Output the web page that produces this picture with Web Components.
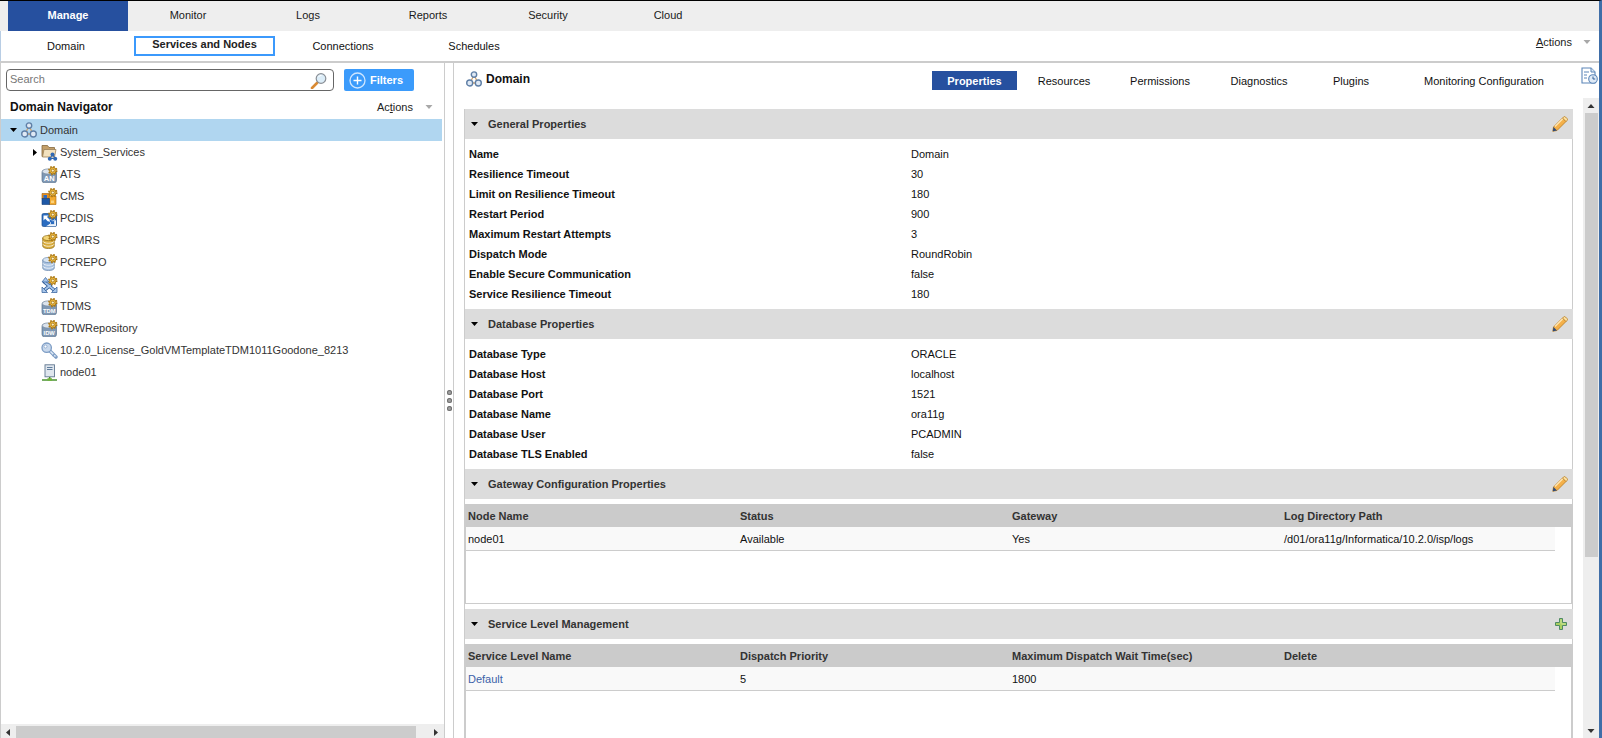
<!DOCTYPE html>
<html lang="en"><head><meta charset="utf-8"><title>Domain</title>
<style>html,body{margin:0;padding:0;background:#fff;overflow:hidden}</style></head>
<body>
<x-app>
  <x-main-tabs>
    <x-main-tab active>Manage</x-main-tab><x-main-tab>Monitor</x-main-tab><x-main-tab>Logs</x-main-tab><x-main-tab>Reports</x-main-tab><x-main-tab>Security</x-main-tab><x-main-tab>Cloud</x-main-tab>
  </x-main-tabs>
  <x-sub-nav>
    <x-sub-item w="130" style="margin-right:3px">Domain</x-sub-item><x-sub-item w="141" active>Services and Nodes</x-sub-item><x-sub-item w="136">Connections</x-sub-item><x-sub-item w="126">Schedules</x-sub-item>
    <x-actions slot="end" style="margin:0 8px 8px 0"><u>A</u>ctions</x-actions>
  </x-sub-nav>
  <x-split>
    <x-navigator slot="left">
      <x-search-bar slot="top"></x-search-bar>
      <x-nav-head slot="top"></x-nav-head>
      <x-tree-row icon="domain" depth="0" expanded selected>Domain</x-tree-row>
      <x-tree-row icon="folder" depth="1" collapsed>System_Services</x-tree-row>
      <x-tree-row icon="ats" depth="1">ATS</x-tree-row>
      <x-tree-row icon="cms" depth="1">CMS</x-tree-row>
      <x-tree-row icon="dis" depth="1">PCDIS</x-tree-row>
      <x-tree-row icon="mrs" depth="1">PCMRS</x-tree-row>
      <x-tree-row icon="repo" depth="1">PCREPO</x-tree-row>
      <x-tree-row icon="pis" depth="1">PIS</x-tree-row>
      <x-tree-row icon="tdm" depth="1">TDMS</x-tree-row>
      <x-tree-row icon="tdw" depth="1">TDWRepository</x-tree-row>
      <x-tree-row icon="key" depth="1">10.2.0_License_GoldVMTemplateTDM1011Goodone_8213</x-tree-row>
      <x-tree-row icon="node" depth="1">node01</x-tree-row>
    </x-navigator>
    <x-details slot="right">
      <x-detail-head slot="head">
        <x-detail-tab w="85" active>Properties</x-detail-tab><x-detail-tab w="94">Resources</x-detail-tab><x-detail-tab w="98">Permissions</x-detail-tab><x-detail-tab w="100">Diagnostics</x-detail-tab><x-detail-tab w="84">Plugins</x-detail-tab><x-detail-tab w="182">Monitoring Configuration</x-detail-tab>
      </x-detail-head>
      <x-section heading="General Properties" action="edit">
        <x-prop name="Name">Domain</x-prop>
        <x-prop name="Resilience Timeout">30</x-prop>
        <x-prop name="Limit on Resilience Timeout">180</x-prop>
        <x-prop name="Restart Period">900</x-prop>
        <x-prop name="Maximum Restart Attempts">3</x-prop>
        <x-prop name="Dispatch Mode">RoundRobin</x-prop>
        <x-prop name="Enable Secure Communication">false</x-prop>
        <x-prop name="Service Resilience Timeout">180</x-prop>
      </x-section>
      <x-section heading="Database Properties" action="edit">
        <x-prop name="Database Type">ORACLE</x-prop>
        <x-prop name="Database Host">localhost</x-prop>
        <x-prop name="Database Port">1521</x-prop>
        <x-prop name="Database Name">ora11g</x-prop>
        <x-prop name="Database User">PCADMIN</x-prop>
        <x-prop name="Database TLS Enabled">false</x-prop>
      </x-section>
      <x-section heading="Gateway Configuration Properties" action="edit">
        <x-grid-table>
          <x-cell slot="head">Node Name</x-cell><x-cell slot="head">Status</x-cell><x-cell slot="head">Gateway</x-cell><x-cell slot="head">Log Directory Path</x-cell>
          <x-cell>node01</x-cell><x-cell>Available</x-cell><x-cell>Yes</x-cell><x-cell>/d01/ora11g/Informatica/10.2.0/isp/logs</x-cell>
        </x-grid-table>
      </x-section>
      <x-section heading="Service Level Management" action="add">
        <x-grid-table>
          <x-cell slot="head">Service Level Name</x-cell><x-cell slot="head">Dispatch Priority</x-cell><x-cell slot="head">Maximum Dispatch Wait Time(sec)</x-cell><x-cell slot="head">Delete</x-cell>
          <x-cell link>Default</x-cell><x-cell>5</x-cell><x-cell>1800</x-cell><x-cell></x-cell>
        </x-grid-table>
      </x-section>
    </x-details>
  </x-split>
</x-app>
<script>
const gear=(x=11.8,y=4.6)=>`<g transform="translate(${x} ${y})"><circle r="3.9" fill="none" stroke="#b07a10" stroke-width="1.600" stroke-dasharray="1.530 1.530"/><circle r="3.300" fill="#f6c03f" stroke="#8f620c" stroke-width=".7"/><circle r="1.500" fill="#fff2c4" stroke="#8a5c08" stroke-width=".7"/></g>`;
const net=`<path d="M8 4 4 12h8z" fill="none" stroke="#d3a56e" stroke-width="1.300"/><g fill="#dfe9f5" stroke="#5f7fa6" stroke-width="1.400"><circle cx="8" cy="3.600" r="2.700"/><circle cx="3.700" cy="12" r="3"/><circle cx="12.300" cy="12" r="3"/></g>`;
const cyl=(t)=>`<rect x="1" y="4" width="14.500" height="12.800" rx="2.500" fill="#7f98b4" stroke="#5c748e" stroke-width=".7"/><ellipse cx="7" cy="5.500" rx="5.700" ry="2.600" fill="#dbe3ec" stroke="#7c8ea2" stroke-width=".7"/><text x="8.200" y="15.300" font-family="Liberation Sans" font-size="${t.length>2?5.800:7.500}" font-weight="700" fill="#fff" text-anchor="middle">${t}</text>`;
const stack=(a,b,c)=>`<g fill="${a}" stroke="${c}" stroke-width=".7"><path d="M1.700 6v8c0 3.400 11.600 3.400 11.600 0V6z"/><ellipse cx="7.500" cy="6" rx="5.800" ry="2.600" fill="${b}"/></g><path d="M2 9.300c1 2.600 10 2.600 11 0M2 12.300c1 2.600 10 2.600 11 0" fill="none" stroke="#fff" stroke-opacity=".8" stroke-width=".9"/>`;
const ICONS={
 domain:net,
 folder:`<path d="M1 1.500h5.500L8 3.500h5.500v9H1z" fill="#c4a06a" stroke="#84683e" stroke-width=".8"/><path d="M3 5.500h12L13.500 13H1.500z" fill="#f2e2bf" stroke="#9a8058" stroke-width=".8"/><path d="M11.500 10.500 9 14.500h5z" fill="none" stroke="#2b62ac"/><g fill="#2f68b4"><circle cx="11.500" cy="10.500" r="2"/><circle cx="8.800" cy="14.800" r="2"/><circle cx="14.200" cy="14.800" r="2"/></g>`,
 ats:cyl('AN')+gear(),
 cms:`<path d="M1 5.500h7.500V11H1z" fill="#e8901e" stroke="#9a5a08" stroke-width=".6"/><path d="M8 8h7v8.500H8z" fill="#f2aa30" stroke="#a86a0a" stroke-width=".6"/><path d="M1 10.500h7.500v6H1z" fill="#1d58a6" stroke="#123d78" stroke-width=".6"/><path d="M2.500 7h3.500v3H2.500z" fill="#2f6cc0"/><path d="M10 12.500h3v2.500h-3z" fill="#fbd27a"/>`+gear(),
 dis:`<rect x="1" y="3.500" width="14.500" height="13" rx="1.500" fill="#2a6cc0" stroke="#174a8c" stroke-width=".7"/><path d="M15 10v5.500a.8.800 0 0 1-.8.800H5z" fill="#eef4fb"/><path d="M2.500 5.500h5L6 7l3 3-1.800 1.800-3-3L2.500 10.500z" fill="#fff"/><path d="M13.500 14.500h-5l1.500-1.500-2-2 1.800-1.800 2 2 1.700-1.700z" fill="#2a6cc0" stroke="#fff" stroke-width=".6"/>`+gear(),
 mrs:stack('#d9ac3c','#f2d475','#8f6d18')+gear(),
 repo:stack('#a9c2e0','#d7e4f2','#6a88ac')+gear(),
 pis:`<g fill="none" stroke-linecap="square"><path d="M4 6.500 13 14M3.500 14 9 9.500" stroke="#2c5a98" stroke-width="3.400"/><path d="M4 6.500 13 14M3.500 14 9 9.500" stroke="#a8c6ea" stroke-width="1.800"/></g><g fill="#a8c6ea" stroke="#2c5a98" stroke-width=".7" stroke-linejoin="round"><path d="M1 6 4.500 1.500 8 6z"/><path d="M1 11l0 5.500L6.500 16.500z"/><path d="M16 16.500 10.500 16.500 16 11z"/></g>`+gear(),
 tdm:cyl('TDM')+gear(),
 tdw:cyl('IDW')+gear(),
 key:`<g fill="none"><path d="m7 7 8 8" stroke="#7c9cc4" stroke-width="3.400" stroke-linecap="round"/><path d="m7.500 7.500 7.500 7.500" stroke="#e0eaf6" stroke-width="1.400"/><path d="m11.500 14 2-2M14 16l1.500-1.500" stroke="#7c9cc4" stroke-width="1.300"/><circle cx="5.700" cy="5.700" r="4.700" fill="#c8d8ec" stroke="#7c9cc4" stroke-width="1.300"/><circle cx="4.500" cy="4.500" r="1.500" fill="#fff" stroke="#7c9cc4" stroke-width=".7"/></g>`,
 node:`<rect x="4" y=".8" width="9.500" height="12" fill="#dfe6ee" stroke="#607890" stroke-width=".9"/><path d="M6 3.500h5.500M6 5.500h5.500" stroke="#5f7c9c"/><path d="M8.700 13v2" stroke="#4a8a2a" stroke-width="1.500"/><path d="M1 16h15" stroke="#3c8a20" stroke-width="1.400"/><rect x="6.500" y="14.200" width="4.400" height="2.600" fill="#6fb23c"/>`
};
const svg=(body,w=17,h=17,vb='0 0 17 17')=>`<svg xmlns="http://www.w3.org/2000/svg" width="${w}" height="${h}" viewBox="${vb}" style="display:block;flex:none">${body}</svg>`;
const PENCIL=svg(`<path d="M1.500 11 10.500 2l3.500 3.500-9 9L.8 15.300z" fill="#f4b04a" stroke="#b97a1a" stroke-width=".8" stroke-linejoin="round"/><path d="m3 10.500 8-8" stroke="#fde8b8" stroke-width="1.300"/><path d="M.8 15.300 1.500 11 5 14.500z" fill="#2e4a78"/><path d="m10.500 2 1-1a1.400 1.400 0 0 1 2 0l1.500 1.500a1.400 1.400 0 0 1 0 2l-1 1z" fill="#fbe0a0" stroke="#b97a1a" stroke-width=".8"/>`,16,16,'0 0 16 16');
const PLUS=`<div style="margin-right:1px;flex:none">`+svg(`<path d="M4.500 .5h3v4h4v3h-4v4h-3v-4h-4v-3h4z" fill="#a9cf60" stroke="#4e8a64" stroke-width="1"/><path d="M5.500 1.500h1v4h4v1h-4v-1h-1z" fill="#d0e6a0"/>`,12,12,'0 0 12 12')+`</div>`;
const TRI_D=(c='#000',w=7,h=4)=>`<svg width="${w}" height="${h}" viewBox="0 0 7 4" style="display:block;flex:none"><path d="M0 0h7L3.500 4z" fill="${c}"/></svg>`;
const TRI_R=`<svg width="4" height="7" viewBox="0 0 4 7" style="display:block;flex:none"><path d="M0 0v7l4-3.500z" fill="#000"/></svg>`;

function el(name,css,render){
  customElements.define(name,class extends HTMLElement{
    connectedCallback(){
      if(this.shadowRoot)return;
      const r=this.attachShadow({mode:'open'});
      r.innerHTML=`<style>${css}</style>`+(render?render(this):'<slot></slot>');
    }
  });
}
el('x-app',`:host{display:flex;flex-direction:column;width:1602px;height:738px;box-sizing:border-box;border-top:1px solid #000;border-right:3px solid #3f6ea8;overflow:hidden;font:11px "Liberation Sans",Arial,sans-serif;color:#111;background:#fff}`);
el('x-main-tabs',`:host{display:flex;flex:none;height:30px;background:#eee;padding-left:8px}`);
el('x-main-tab',`:host{display:flex;align-items:center;justify-content:center;width:120px;height:30px;box-sizing:border-box;padding-bottom:2px;color:#1a1a1a}
:host([active]){background:#26509f;color:#fff;font-weight:700}`);
el('x-sub-nav',`:host{display:flex;flex:none;height:30px;align-items:center;border-left:1px solid #b8cde4;box-sizing:border-box}
.end{margin-left:auto;display:flex}`,()=>`<slot></slot><div class="end"><slot name="end"></slot></div>`);
el('x-sub-item',`:host{display:flex;align-items:center;justify-content:center;height:20px;box-sizing:border-box;color:#111}
:host([active]){border:2px solid #3b99fc;font-weight:700;padding-bottom:4px;color:#222}`,h=>{h.style.width=h.getAttribute('w')+'px';return '<slot></slot>'});
el('x-actions',`:host{display:flex;align-items:center;gap:11px;color:#222}`,()=>`<span><slot></slot></span>${TRI_D('#a8a8a8',8,4)}`);
el('x-split',`:host{display:flex;flex:1;min-height:0;border-top:2px solid #ccc}
.h{width:8px;flex:none;display:flex;flex-direction:column;align-items:center;justify-content:center;gap:3px}
.h i{width:5px;height:5px;border-radius:50%;background:#a0a0a0;box-shadow:inset 0 0 0 1px #707070}`,
()=>`<slot name="left"></slot><div class="h"><i></i><i></i><i></i></div><slot name="right"></slot>`);
el('x-navigator',`:host{display:flex;flex-direction:column;width:445px;flex:none;box-sizing:border-box;border-left:1px solid #ccc;border-right:1px solid #ccc}
.top{flex:none}.tree{flex:1;min-height:0;overflow:hidden}
.sb{flex:none;height:14px;display:flex;align-items:flex-end;background:#eee;padding-left:5px}
.sb .t{height:12px;width:400px;background:#ccc;margin:0 18px 0 5px}.sb .a{height:12px;display:flex;align-items:center;width:5px}`,
()=>`<div class="top"><slot name="top"></slot></div><div class="tree"><slot></slot></div>
<div class="sb"><span class="a"><svg width="4" height="7" viewBox="0 0 4 7"><path d="M4 0v7L0 3.500z" fill="#333"/></svg></span><span class="t"></span><span class="a"><svg width="4" height="7" viewBox="0 0 4 7"><path d="M0 0v7l4-3.500z" fill="#333"/></svg></span></div>`);
el('x-search-bar',`:host{display:flex;height:28px;padding:6px 0 0 5px;box-sizing:border-box;gap:10px}
.s{width:328px;height:22px;box-sizing:border-box;border:1px solid #666;border-radius:4px;display:flex;align-items:center;padding:0 6px 0 3px;justify-content:space-between;color:#777;font-size:11px;background:#fff}
.s span{padding-bottom:2px}
.b{width:70px;height:22px;border-radius:2px;background:#3b9bfb;color:#fff;font-weight:700;display:flex;align-items:center;gap:4px;padding-left:5px;box-sizing:border-box}`,
()=>`<div class="s"><span>Search</span>${svg(`<path d="M7 11 2 16" stroke="#d98a34" stroke-width="2.600" stroke-linecap="round"/><circle cx="11" cy="6.500" r="4.800" fill="#dcedf8" stroke="#8a8f96" stroke-width="1.200"/><path d="M8.500 5a3 3 0 0 1 3-1.500" stroke="#fff" fill="none"/>`)}</div>
<div class="b">${svg(`<circle cx="8.500" cy="8.500" r="7.500" fill="none" stroke="#cfe6ff" stroke-width="1.300"/><path d="M8.500 4.500v8M4.500 8.500h8" stroke="#fff" stroke-width="1.400"/>`)}<span>Filters</span></div>`);
el('x-nav-head',`:host{display:flex;height:28px;align-items:center;padding:4px 11px 0 9px;box-sizing:border-box;justify-content:space-between}
b{font-size:12px;color:#111}`,()=>`<b>Domain Navigator</b><x-actions style="gap:12px">Ac<u>t</u>ions</x-actions>`);
el('x-tree-row',`:host{display:flex;align-items:center;height:22px;box-sizing:border-box;color:#333;margin-right:2px}
:host([selected]){background:#b0d6f0}
.a{width:7px;flex:none;display:flex;justify-content:center}`,h=>{
  const d=+h.getAttribute('depth');
  h.style.paddingLeft=(d?30:9)+'px';
  const arrow=h.hasAttribute('expanded')?TRI_D():h.hasAttribute('collapsed')?TRI_R:'';
  return `<span class="a">${arrow}</span><span style="margin:0 ${d?2:3}px 0 ${d?3:4}px">${h.getAttribute('icon')=='domain'?svg(ICONS.domain,16,16,'0 0 16 16'):svg(ICONS[h.getAttribute('icon')])}</span><slot></slot>`;
});
el('x-details',`:host{display:flex;flex-direction:column;flex:1;min-width:0;border-left:1px solid #ccc;box-sizing:border-box}
.head{flex:none}.body{flex:1;min-height:0;display:flex;gap:10px;padding-left:10px}
.c{width:1109px;padding-top:11px;overflow:hidden;flex:none}
.sb{width:16px;background:#eee;flex:none;display:flex;flex-direction:column;align-items:center}
.sb .a{height:15px;display:flex;align-items:center}.sb .t{width:13px;height:444px;background:#ccc}
.sb .sp{flex:1}`,()=>`<div class="head"><slot name="head"></slot></div><div class="body"><div class="c"><slot></slot></div>
<div class="sb"><span class="a"><svg width="8" height="4" viewBox="0 0 7 4"><path d="M0 4h7L3.500 0z" fill="#333"/></svg></span><span class="t"></span><span class="sp"></span><span class="a">${TRI_D('#333',8,4)}</span></div></div>`);
el('x-detail-head',`:host{display:flex;height:35px;box-sizing:border-box;padding:8px 1px 0 12px;align-items:flex-start}
.t{display:flex;align-items:center;gap:4px;font-weight:700;font-size:12px;color:#111;height:16px}
.r{margin-left:auto;display:flex}.i{margin-left:6px;margin-top:-4px}`,
()=>`<div class="t">${svg(ICONS.domain,16,16,'0 0 16 16')}<span>Domain</span></div><div class="r"><slot></slot></div>
<div class="i">${svg(`<path d="M1 1h9l4 4v11H1z" fill="#fff" stroke="#5c86b8" stroke-width="1.100"/><path d="M10 1v4h4" fill="#dbe7f4" stroke="#5c86b8"/><path d="M3 5h5M3 8h3M3 11h3" stroke="#5c86b8"/><circle cx="12" cy="12" r="4.300" fill="#dfeaf6" stroke="#5c86b8" stroke-width="1.100"/><path d="M12 9.500V12h2.200" stroke="#2f5c96" fill="none"/>`)}</div>`);
el('x-detail-tab',`:host{display:flex;align-items:center;justify-content:center;height:19px;color:#111;box-sizing:border-box}
:host([active]){background:#26509f;color:#fff;font-weight:700}`,h=>{h.style.width=h.getAttribute('w')+'px';return '<slot></slot>'});
el('x-section',`:host{display:block}
.h{height:30px;background:#dcdcdc;display:flex;align-items:center;padding:0 5px 0 7px;font-weight:700;color:#333;box-shadow:inset 1px 0 #ccc;gap:10px}
.h span{flex:1}
.b{padding:5px 0;box-sizing:border-box;box-shadow:inset 1px 0 #ccc,inset -1px 0 #ccc}`,h=>`<div class="h">${TRI_D()}<span>${h.getAttribute('heading')}</span>${h.getAttribute('action')=='add'?PLUS:PENCIL}</div><div class="b"><slot></slot></div>`);
el('x-prop',`:host{display:flex;height:20px;align-items:center;padding-left:5px}
b{width:442px;flex:none;color:#111}`,h=>`<b>${h.getAttribute('name')}</b><slot></slot>`);
el('x-grid-table',`:host{display:block;height:100px;box-sizing:border-box;border:solid #ccc;border-width:0 2px 1px 2px}
.h{display:grid;grid-template-columns:repeat(4,272px);height:23px;background:#cbcbcb;margin-right:-2px;font-weight:700;color:#333}
.r{display:grid;grid-template-columns:repeat(4,272px);background:#f9f9f9;border-bottom:1px solid #ccc;width:1089px;height:23px}`,
()=>`<div class="h"><slot name="head"></slot></div><div class="r"><slot></slot></div>`);
el('x-cell',`:host{display:flex;align-items:center;padding:1px 0 0 2px;color:inherit}
:host([link]){color:#3b62a8}`);
</script>
</body></html>
